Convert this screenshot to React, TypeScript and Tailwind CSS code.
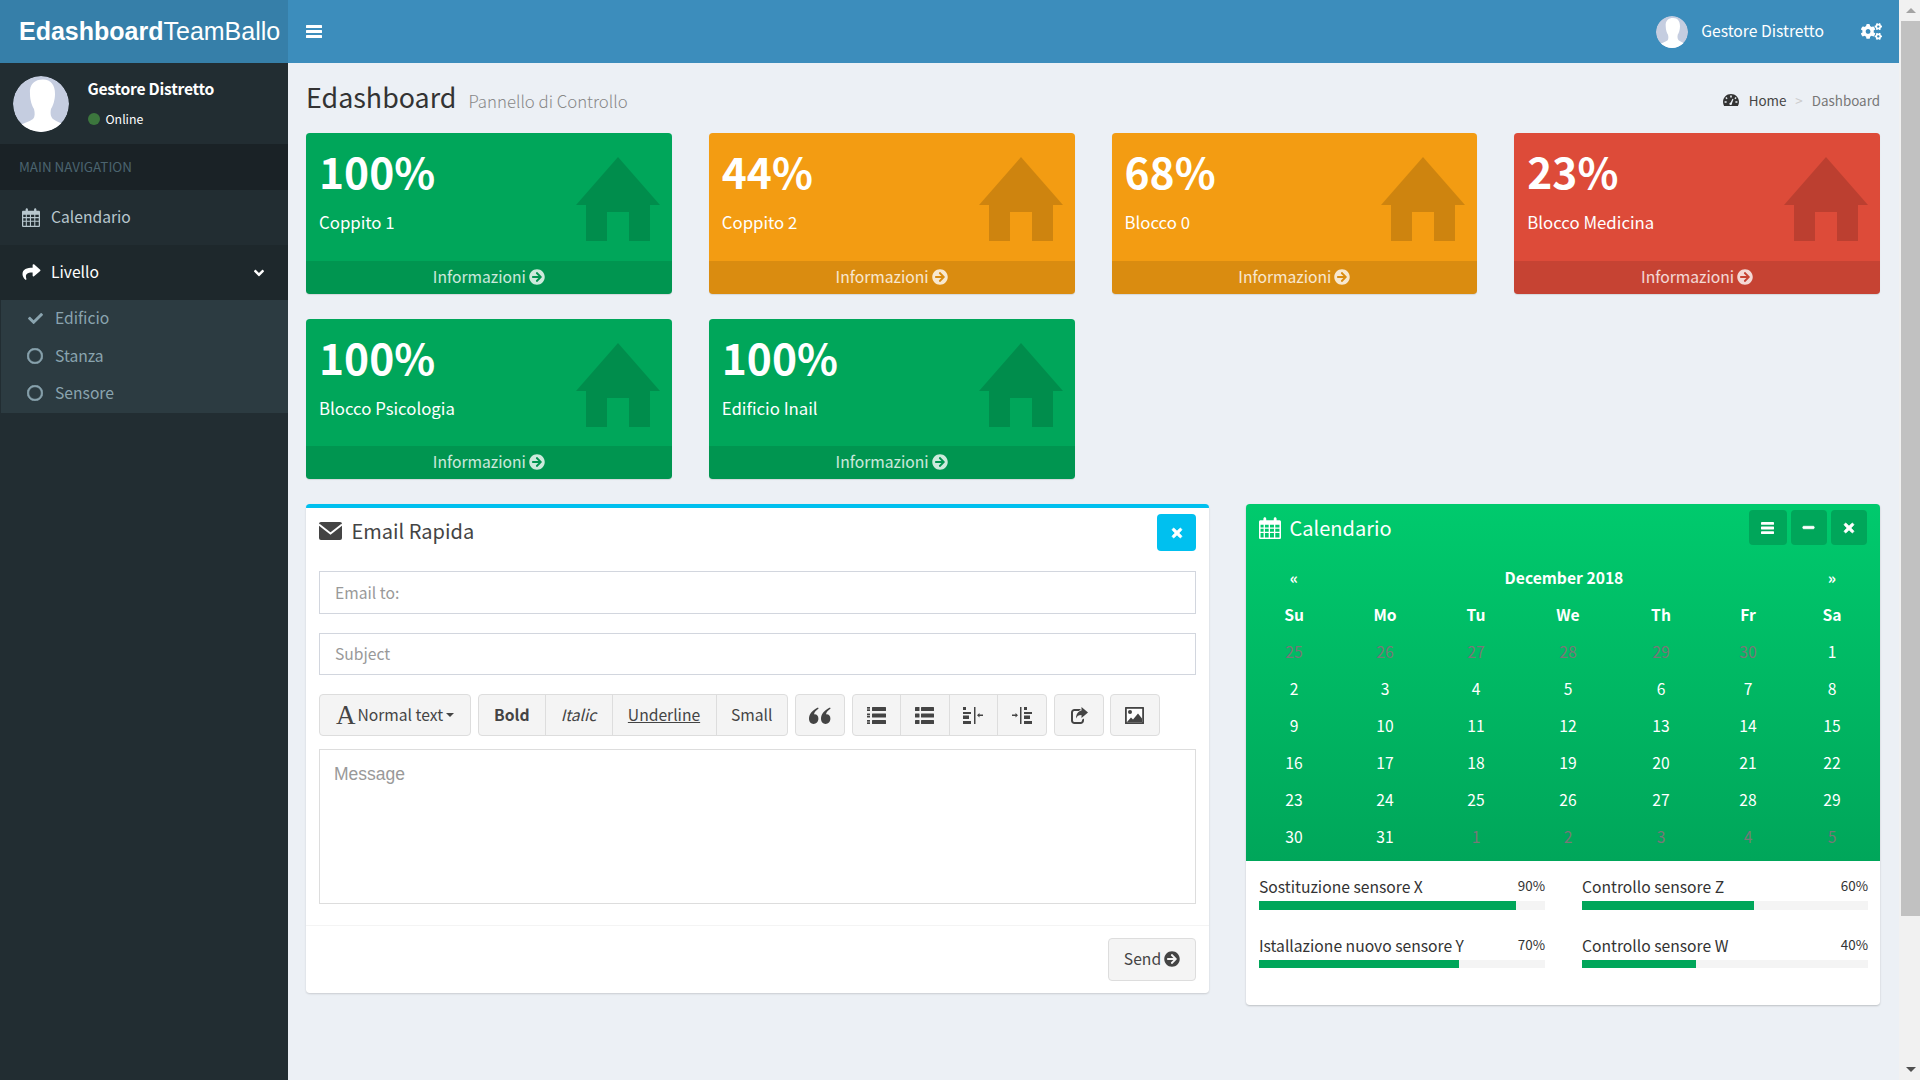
import React from "react";
import { FaCogs, FaShare, FaCheck, FaRegCircle, FaAngleDown, FaArrowCircleRight, FaTimes, FaMinus } from "react-icons/fa";

const SANS = "font-['Noto_Sans_CJK_SC','Noto_Sans',sans-serif]";

function Avatar({ size }: { size: number }) {
  return (
    <svg width={size} height={size} viewBox="0 0 56 56" className="shrink-0 rounded-full">
      <circle cx="28" cy="28" r="28" fill="#c5cde0" />
      <path fill="#fff" d="M17 18C16 8 22 3.5 30 3.5C38 3.5 42 9 42 18C42 24 40 30 38 33C37 38 38 41 40 43C44 46 49 47 52 49L52 56L6 56L6 50C10 47 16 46 20 43C22 41 22 37 21 33C19 30 17 24 17 18Z" />
    </svg>
  );
}

function BarsIcon({ w, h }: { w: number; h: number }) {
  return (
    <svg width={w} height={h} viewBox="0 0 16 13" fill="currentColor" preserveAspectRatio="none" className="shrink-0">
      <rect width="16" height="3" rx="0.5" />
      <rect y="5" width="16" height="3" rx="0.5" />
      <rect y="10" width="16" height="3" rx="0.5" />
    </svg>
  );
}

function CalendarIcon({ w, h }: { w: number; h: number }) {
  return (
    <svg width={w} height={h} viewBox="0 0 20 21" preserveAspectRatio="none" fill="currentColor" className="shrink-0">
      <path fillRule="evenodd" d="M1.500 3H4V1.800C4 .8 4.600.2 5.300.2S6.600.8 6.600 1.800V3h6.800V1.800C13.400.8 14 .2 14.700.2s1.300.6 1.300 1.600V3h2.500C19.400 3 20 3.600 20 4.500V19.500C20 20.400 19.400 21 18.500 21H1.500C.6 21 0 20.400 0 19.500V4.500C0 3.600.6 3 1.500 3ZM1.400 7.500V10H4.200V7.500ZM5.400 7.500V10H8.800V7.500ZM10 7.500V10H13.600V7.500ZM14.800 7.500V10H18.600V7.500ZM1.400 11.200V14H4.200V11.200ZM5.400 11.200V14H8.800V11.200ZM10 11.200V14H13.600V11.200ZM14.800 11.200V14H18.600V11.200ZM1.400 15.200V19.600H4.200V15.200ZM5.400 15.200V19.600H8.800V15.200ZM10 15.200V19.600H13.600V15.200ZM14.800 15.200V19.600H18.600V15.200Z" />
    </svg>
  );
}

function EnvelopeIcon() {
  return (
    <svg width="23" height="18" viewBox="0 0 23 18" className="shrink-0">
      <rect width="23" height="18" rx="2" fill="#444" />
      <path d="M0 2.500L11.500 11.500L23 2.500" fill="none" stroke="#fff" strokeWidth="1.800" />
    </svg>
  );
}

function GaugeIcon() {
  return (
    <svg width="16" height="12" viewBox="0 0 16 12" fill="#333" className="shrink-0">
      <path fillRule="evenodd" d="M8 0C3.600 0 0 3.400 0 8c0 1.500.4 2.800 1.100 4h13.800C15.600 10.800 16 9.500 16 8c0-4.600-3.600-8-8-8ZM7.200 1.500h1.600v2H7.200ZM3.400 3l1.200 1.200-1 1L2.400 4ZM12.600 3l1 1-1.200 1.200-1-1ZM1.600 7.200h2v1.600h-2ZM12.400 7.200h2v1.600h-2ZM9.500 4.800l1 .5L9 9.300c.2.800-.2 1.500-1 1.700-.8.100-1.500-.4-1.600-1.100-.1-.7.4-1.400 1.200-1.500Z" />
    </svg>
  );
}

function HomeGlyph() {
  return (
    <svg width="84" height="84" viewBox="0 0 84 84" className="absolute right-[12px] top-[24px]" fill="rgba(0,0,0,0.15)">
      <path d="M42 0L84 48H74V84H53V55H31V84H10V48H0Z" />
    </svg>
  );
}

function QuoteIcon() {
  return (
    <svg width="22" height="17" viewBox="0 0 22 17" fill="#444">
      <path d="M9 0.500L9.600 1.500C7 3.300 5.300 5.300 5 7.400C7.500 7 9.500 8.800 9.400 11.800C9.300 14.800 7.300 17 4.600 17C1.800 17 0 14.800 0 11.800C0 7 3.500 3 9 0.500Z" />
      <path d="M21 0.500L21.600 1.500C19 3.300 17.300 5.300 17 7.400C19.500 7 21.500 8.800 21.400 11.800C21.300 14.800 19.300 17 16.600 17C13.800 17 12 14.800 12 11.800C12 7 15.500 3 21 0.500Z" />
    </svg>
  );
}

function ListUlIcon() {
  return (
    <svg width="19" height="17" viewBox="0 0 19 17" fill="#444">
      {[0, 6.500, 13].map((y) => (
        <g key={y}>
          <rect x="0" y={y} width="3" height="1.700" />
          <rect x="0" y={y + 2.300} width="3" height="1.700" />
          <rect x="5" y={y} width="14" height="4" rx="0.500" />
        </g>
      ))}
    </svg>
  );
}

function ListIcon() {
  return (
    <svg width="19" height="17" viewBox="0 0 19 17" fill="#444">
      {[0, 6.500, 13].map((y) => (
        <g key={y}>
          <rect x="0" y={y} width="4.500" height="4" rx="0.500" />
          <rect x="6" y={y} width="13" height="4" rx="0.500" />
        </g>
      ))}
    </svg>
  );
}

function ShareSquareIcon() {
  return (
    <svg width="18" height="17" viewBox="0 0 18 17" fill="#444">
      <path d="M11 2H4.500C2.500 2 1 3.500 1 5.500V13.500C1 15.500 2.500 17 4.500 17H10.500C12.500 17 14 15.500 14 13.500V11.500L12 12.800V13.500C12 14.400 11.400 15 10.500 15H4.500C3.600 15 3 14.400 3 13.500V5.500C3 4.600 3.600 4 4.500 4H9Z" />
      <path d="M11.500 0L18 5.500L11.500 11V8C8.500 8 7 9 6 11.500C6 7.500 8 4 11.500 3.500Z" />
    </svg>
  );
}

function PictureIcon() {
  return (
    <svg width="19" height="17" viewBox="0 0 19 17">
      <rect width="19" height="17" fill="#444" rx="0.500" />
      <rect x="1.800" y="1.800" width="15.400" height="13.400" fill="#fff" />
      <circle cx="5" cy="5" r="2" fill="#444" />
      <path d="M2 15L6 10.500L8 12.500L13 6.500L17 11.500V15Z" fill="#444" />
    </svg>
  );
}

function OutdentIcon() {
  return (
    <svg width="20" height="17" viewBox="0 0 20 17" fill="#444">
      <rect x="0" y="0" width="3" height="3" />
      <rect x="0" y="5" width="8" height="2" />
      <rect x="0" y="8.500" width="6" height="3.500" />
      <rect x="0" y="14" width="8" height="3" />
      <rect x="11" y="0" width="1.500" height="17" />
      <rect x="15" y="7.500" width="5" height="1.500" />
      <path d="M14 8.200L16.500 6V10.500Z" />
    </svg>
  );
}

function IndentIcon() {
  return (
    <svg width="20" height="17" viewBox="0 0 20 17" fill="#444">
      <rect x="0" y="7.500" width="5" height="1.500" />
      <path d="M6 8.200L3.500 6V10.500Z" />
      <rect x="8" y="0" width="1.500" height="17" />
      <rect x="12" y="0" width="3" height="3" />
      <rect x="12" y="5" width="8" height="2" />
      <rect x="12" y="8.500" width="6" height="3.500" />
      <rect x="12" y="14" width="8" height="3" />
    </svg>
  );
}

function Header() {
  return (
    <header className="flex h-[63px] shrink-0 bg-[#3c8dbc] text-white">
      <div className="flex w-[288px] shrink-0 items-center whitespace-nowrap bg-[#367fa9] pl-[19px] font-['Liberation_Sans',sans-serif] text-[25px] leading-none">
        <b>Edashboard</b>
        <span>TeamBallo</span>
      </div>
      <div className="flex flex-1 items-center justify-between pl-[18px] pr-[17px]">
        <BarsIcon w={16} h={13} />
        <div className={`flex items-center ${SANS}`}>
          <Avatar size={32} />
          <span className="ml-[13px] pb-[2px] text-[15.660px] leading-none">Gestore Distretto</span>
          <FaCogs className="ml-[37px] h-[21px] w-[21px]" />
        </div>
      </div>
    </header>
  );
}

function Sidebar() {
  return (
    <aside className={`flex w-[288px] shrink-0 flex-col bg-[#222d32] ${SANS}`}>
      <div className="flex h-[81px] items-center pl-[13px]">
        <Avatar size={56} />
        <div className="mb-[2px] ml-[18.500px]">
          <div className="text-[15.660px] font-bold leading-[22px] tracking-[-0.25px] text-white">Gestore Distretto</div>
          <div className="mt-[10px] flex items-center text-[12.300px] leading-[18px] text-white">
            <span className="mr-[6px] h-[12px] w-[12px] rounded-full bg-[#3c763d]" />
            Online
          </div>
        </div>
      </div>
      <div className="flex h-[46px] items-center bg-[#1a2226] pb-[2px] pl-[19px] text-[13.400px] text-[#4b646f]">MAIN NAVIGATION</div>
      <div className="flex h-[55px] items-center pl-[22px] text-[15.660px] text-[#b8c7ce]">
        <CalendarIcon w={18} h={19} />
        <span className="mb-[2px] ml-[11px]">Calendario</span>
      </div>
      <div className="flex h-[55px] items-center justify-between bg-[#1e282c] pl-[22px] pr-[22px] text-[15.660px] text-white">
        <span className="flex items-center">
          <FaShare className="h-[18px] w-[19px]" />
          <span className="mb-[2px] ml-[10px]">Livello</span>
        </span>
        <FaAngleDown className="h-[16px] w-[14px]" />
      </div>
      <div className="ml-px flex flex-col bg-[#2c3b41] py-px text-[15.660px] text-[#8aa4af]">
        <div className="flex h-[37px] items-center pl-[26px]">
          <FaCheck className="mb-[2px] h-[15px] w-[17px]" />
          <span className="mb-[3px] ml-[11px]">Edificio</span>
        </div>
        <div className="flex h-[37px] items-center pl-[26px]">
          <FaRegCircle className="mb-[1px] h-[16px] w-[16px]" stroke="currentColor" strokeWidth={24} />
          <span className="mb-[2px] ml-[12px]">Stanza</span>
        </div>
        <div className="flex h-[37px] items-center pl-[26px]">
          <FaRegCircle className="mb-[1px] h-[16px] w-[16px]" stroke="currentColor" strokeWidth={24} />
          <span className="mb-[2px] ml-[12px]">Sensore</span>
        </div>
      </div>
    </aside>
  );
}

function StatCard({ value, label, color, height }: { value: string; label: string; color: string; height: string }) {
  return (
    <div className={`relative flex ${height} flex-col overflow-hidden rounded-[3.750px] text-white shadow-[0_1px_1px_rgba(0,0,0,0.1)] ${color}`}>
      <HomeGlyph />
      <div className="flex-1 pl-[13px]">
        <div className="mt-[7.500px] text-[42.500px] font-bold leading-[60px]">{value}</div>
        <div className="mt-[8.500px] text-[16.800px] leading-[26px]">{label}</div>
      </div>
      <div className="flex h-[33px] items-center justify-center gap-[3px] bg-black/10 pb-[1px] text-[15.660px] text-white/80">
        Informazioni
        <FaArrowCircleRight className="h-[16px] w-[16px]" />
      </div>
    </div>
  );
}

function ToolBtn({ w, children, className = "" }: { w: string; children?: React.ReactNode; className?: string }) {
  return <div className={`flex h-full items-center justify-center ${w} ${className}`}>{children}</div>;
}

function EmailBox() {
  const group = "flex h-[42px] items-center rounded-[4px] border border-[#ddd] bg-[#f4f4f4] text-[#444]";
  return (
    <section className="w-[903px] shrink-0 self-start rounded-[3.750px] border-t-4 border-[#00c0ef] bg-white shadow-[0_1px_2px_rgba(0,0,0,0.15)]">
      <div className="flex h-[47px] items-start justify-between pl-[13px] pr-[13px] pt-[6px]">
        <div className="flex items-center pt-[2px] text-[20px] leading-[30px] text-[#444]">
          <EnvelopeIcon />
          <span className="ml-[9.500px]">Email Rapida</span>
        </div>
        <div className="flex h-[37px] w-[39px] items-center justify-center rounded-[4px] bg-[#00c0ef] text-white">
          <FaTimes className="h-[14px] w-[12px]" stroke="currentColor" strokeWidth={30} />
        </div>
      </div>
      <div className="flex flex-col px-[13px] pt-[16px]">
        <input placeholder="Email to:" className="h-[43px] border border-[#d2d6de] bg-white px-[15px] text-[15.660px] outline-none placeholder:text-[#999]" />
        <input placeholder="Subject" className="mt-[19px] h-[42px] border border-[#d2d6de] bg-white px-[15px] pb-[2px] text-[15.660px] outline-none placeholder:text-[#999]" />
        <div className="mt-[19px] flex text-[15.660px]">
          <div className={`${group} w-[152px] justify-center`}>
            <span className="font-['Liberation_Serif',serif] text-[27px] leading-none">A</span>
            <span className="ml-[2px]">Normal text</span>
            <span className="ml-[3px] h-0 w-0 border-x-[4px] border-t-[4px] border-x-transparent border-t-[#444]" />
          </div>
          <div className={`${group} ml-[7px] w-[310px]`}>
            <ToolBtn w="w-[66.500px]" className="border-r border-[#ddd] font-bold">Bold</ToolBtn>
            <ToolBtn w="w-[67px]" className="border-r border-[#ddd] italic">Italic</ToolBtn>
            <ToolBtn w="w-[104px]" className="border-r border-[#ddd] underline">Underline</ToolBtn>
            <ToolBtn w="flex-1">Small</ToolBtn>
          </div>
          <div className={`${group} ml-[6.500px] w-[50px] justify-center`}><QuoteIcon /></div>
          <div className={`${group} ml-[7px] w-[195px]`}>
            <ToolBtn w="flex-1" className="border-r border-[#ddd]"><ListUlIcon /></ToolBtn>
            <ToolBtn w="flex-1" className="border-r border-[#ddd]"><ListIcon /></ToolBtn>
            <ToolBtn w="flex-1" className="border-r border-[#ddd]"><OutdentIcon /></ToolBtn>
            <ToolBtn w="flex-1"><IndentIcon /></ToolBtn>
          </div>
          <div className={`${group} ml-[7px] w-[50px] justify-center`}><ShareSquareIcon /></div>
          <div className={`${group} ml-[6.500px] w-[49.500px] justify-center`}><PictureIcon /></div>
        </div>
        <textarea placeholder="Message" className="mt-[13px] h-[155px] resize-none border border-[#ddd] bg-white px-[14px] pb-[9px] pt-[11px] font-['Liberation_Sans',sans-serif] text-[17.500px] outline-none placeholder:text-[#999]" />
      </div>
      <div className="mt-[21px] flex h-[68px] justify-end border-t border-[#f4f4f4] pr-[13px] pt-[12px]">
        <div className="flex h-[43px] w-[88px] items-center justify-center gap-[3px] rounded-[4px] border border-[#ddd] bg-[#f4f4f4] pb-[2px] text-[15.660px] text-[#444]">
          Send
          <FaArrowCircleRight className="h-[16px] w-[16px]" />
        </div>
      </div>
    </section>
  );
}

const WEEK = ["Su", "Mo", "Tu", "We", "Th", "Fr", "Sa"];
const DAYS: [string, boolean][] = [
  ["25", true], ["26", true], ["27", true], ["28", true], ["29", true], ["30", true], ["1", false],
  ["2", false], ["3", false], ["4", false], ["5", false], ["6", false], ["7", false], ["8", false],
  ["9", false], ["10", false], ["11", false], ["12", false], ["13", false], ["14", false], ["15", false],
  ["16", false], ["17", false], ["18", false], ["19", false], ["20", false], ["21", false], ["22", false],
  ["23", false], ["24", false], ["25", false], ["26", false], ["27", false], ["28", false], ["29", false],
  ["30", false], ["31", false], ["1", true], ["2", true], ["3", true], ["4", true], ["5", true],
];

function Progress({ label, pct, thick }: { label: string; pct: number; thick: string }) {
  return (
    <div>
      <div className="flex h-[26px] items-center justify-between text-[#333]">
        <span className="text-[15.660px]">{label}</span>
        <span className="pb-[3px] text-[13.400px]">{pct}%</span>
      </div>
      <div className={`${thick} mt-[1px] bg-[#f4f4f4]`}>
        <div className="h-full bg-[#00a65a]" style={{ width: `${pct}%` }} />
      </div>
    </div>
  );
}

function CalendarBox() {
  const tool = "flex h-[35px] items-center justify-center rounded-[4px] bg-[#00a65a] text-white";
  return (
    <section className="flex-1 self-start overflow-hidden rounded-[3.750px] bg-white shadow-[0_1px_2px_rgba(0,0,0,0.2)]">
      <div className="h-[357px] bg-gradient-to-b from-[#00ca6d] to-[#00a65a] text-white">
        <div className="flex h-[55px] items-start justify-between pl-[13px] pr-[13px] pt-[6px]">
          <div className="flex h-[35px] items-center text-[20px]">
            <CalendarIcon w={22} h={22} />
            <span className="ml-[8.500px]">Calendario</span>
          </div>
          <div className="flex gap-[4px]">
            <div className={`${tool} w-[38px]`}><BarsIcon w={13} h={12} /></div>
            <div className={`${tool} w-[36px]`}><FaMinus className="h-[13px] w-[13px]" stroke="currentColor" strokeWidth={30} /></div>
            <div className={`${tool} w-[36.500px]`}><FaTimes className="h-[14px] w-[12px]" stroke="currentColor" strokeWidth={30} /></div>
          </div>
        </div>
        <div className="grid grid-cols-[91px_91px_91px_93px_93px_81px_87px] pl-[2.500px] text-center text-[15.660px]">
          <div className="flex h-[37px] items-center justify-center font-bold">«</div>
          <div className="col-span-5 flex h-[37px] items-center justify-center font-bold">December 2018</div>
          <div className="flex h-[37px] items-center justify-center font-bold">»</div>
          {WEEK.map((d) => (
            <div key={d} className="flex h-[37px] items-center justify-center font-bold">{d}</div>
          ))}
          {DAYS.map(([d, muted], i) => (
            <div key={i} className={`flex h-[37px] items-center justify-center ${muted ? "text-[#777]" : ""}`}>{d}</div>
          ))}
        </div>
      </div>
      <div className="grid h-[144px] grid-cols-[286px_286px] content-start gap-x-[37px] gap-y-[23px] pl-[13px] pt-[13px]">
        <Progress label="Sostituzione sensore X" pct={90} thick="h-[9px]" />
        <Progress label="Controllo sensore Z" pct={60} thick="h-[9px]" />
        <Progress label="Istallazione nuovo sensore Y" pct={70} thick="h-[8px]" />
        <Progress label="Controllo sensore W" pct={40} thick="h-[8px]" />
      </div>
    </section>
  );
}

function Scrollbar() {
  return (
    <div className="flex w-[21px] shrink-0 flex-col bg-[#f1f1f1] pl-[2px]">
      <div className="flex h-[21px] items-center justify-center">
        <div className="h-0 w-0 border-x-[5px] border-b-[5px] border-x-transparent border-b-[#a3a3a3]" />
      </div>
      <div className="h-[895px] bg-[#c1c1c1]" />
      <div className="flex-1" />
      <div className="flex h-[21px] items-center justify-center">
        <div className="h-0 w-0 border-x-[5px] border-t-[5px] border-x-transparent border-t-[#505050]" />
      </div>
    </div>
  );
}

export default function App() {
  return (
    <div className={`flex h-[1080px] w-full overflow-hidden bg-[#ecf0f5] ${SANS}`}>
      <div className="flex min-w-0 flex-1 flex-col">
        <Header />
        <div className="flex flex-1">
          <Sidebar />
          <main className="min-w-0 flex-1 pl-[18px] pr-[19px]">
            <div className="flex h-[70px] items-center justify-between pb-[1.500px]">
              <div className="flex items-baseline whitespace-nowrap">
                <span className="text-[26.850px] leading-none text-[#333]">Edashboard</span>
                <span className="ml-[12px] text-[16.800px] font-light leading-none text-[#888]">Pannello di Controllo</span>
              </div>
              <div className="flex items-center pt-[6px] text-[13.400px] leading-none">
                <GaugeIcon />
                <span className="ml-[10px] text-[#444]">Home</span>
                <span className="mx-[9px] text-[#ccc]">&gt;</span>
                <span className="text-[#777]">Dashboard</span>
              </div>
            </div>
            <div className="grid grid-cols-4 gap-x-[37px] gap-y-[25px]">
              <StatCard value="100%" label="Coppito 1" color="bg-[#00a65a]" height="h-[161px]" />
              <StatCard value="44%" label="Coppito 2" color="bg-[#f39c12]" height="h-[161px]" />
              <StatCard value="68%" label="Blocco 0" color="bg-[#f39c12]" height="h-[161px]" />
              <StatCard value="23%" label="Blocco Medicina" color="bg-[#dd4b39]" height="h-[161px]" />
              <StatCard value="100%" label="Blocco Psicologia" color="bg-[#00a65a]" height="h-[160px]" />
              <StatCard value="100%" label="Edificio Inail" color="bg-[#00a65a]" height="h-[160px]" />
            </div>
            <div className="mt-[25px] flex gap-[37px]">
              <EmailBox />
              <CalendarBox />
            </div>
          </main>
        </div>
      </div>
      <Scrollbar />
    </div>
  );
}
